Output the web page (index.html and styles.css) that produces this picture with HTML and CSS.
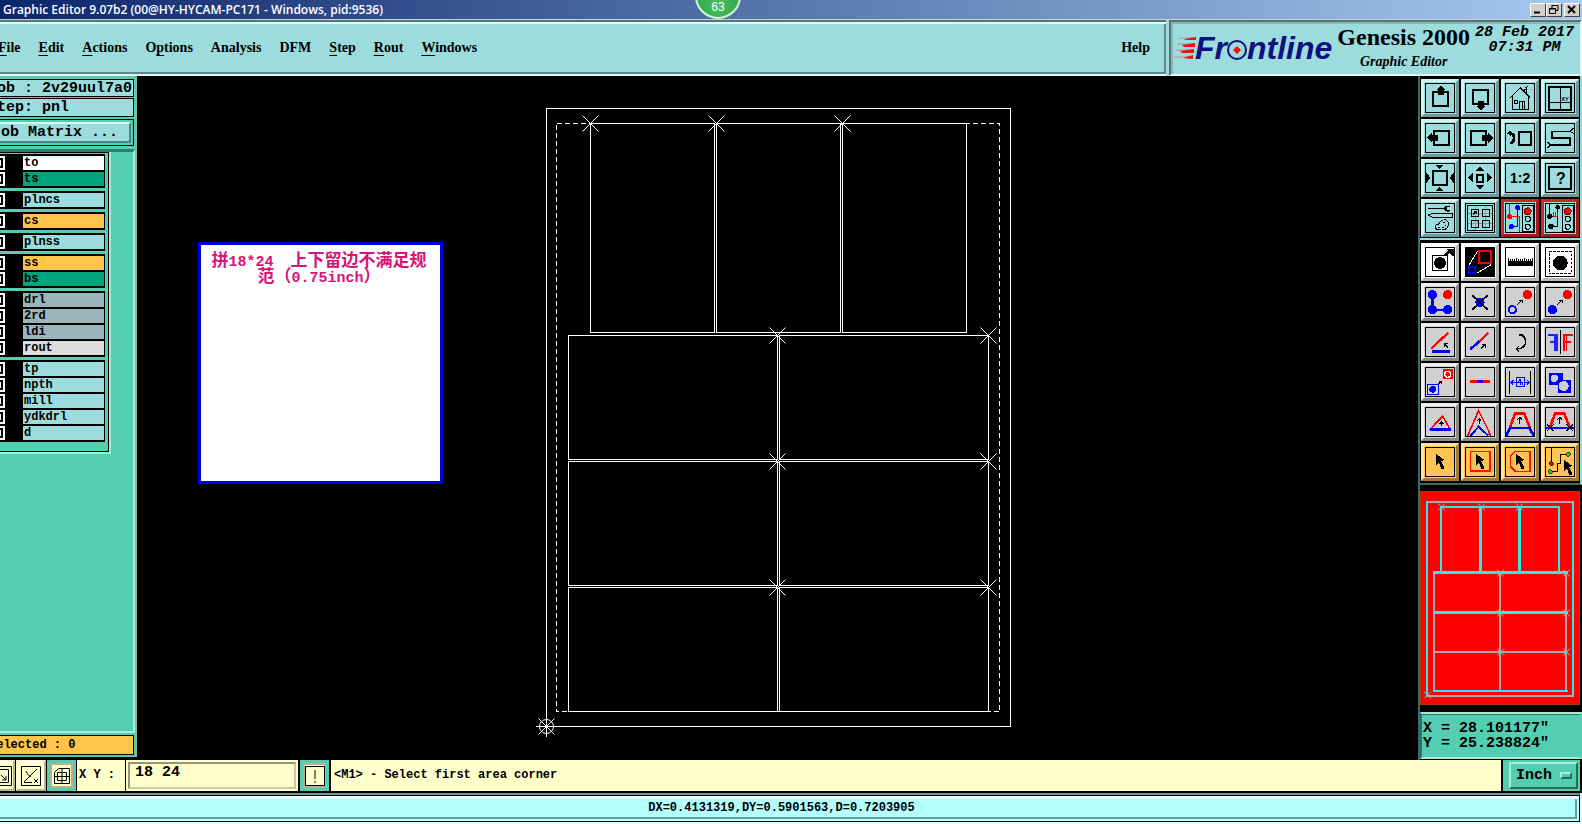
FILE: index.html
```html
<!DOCTYPE html>
<html lang="en">
<head>
<meta charset="utf-8">
<title>Graphic Editor</title>
<link rel="stylesheet" href="styles.css">
</head>
<body>
<svg class="defs" width="0" height="0" aria-hidden="true">
  <defs>
    <path id="cursor" d="M44 31L70 51L61 55L71 76L63 80L53 59L45 66Z"/>
    <path id="cross" d="M-8 -8L8 8M8 -8L-8 8"/>
    <g id="lamps"><rect x="64" y="19" width="32" height="78" fill="#9cdcdc" stroke="#000" stroke-width="3"/><circle cx="80" cy="37" r="11" fill="#f00" stroke="#000" stroke-width="2"/><circle cx="80" cy="60" r="8" fill="none" stroke="#000" stroke-width="3"/><circle cx="80" cy="83" r="8" fill="none" stroke="#000" stroke-width="3"/></g>
  </defs>
</svg>
<div class="app">
  <header class="titlebar">
    <h1>Graphic Editor 9.07b2 (00@HY-HYCAM-PC171 - Windows, pid:9536)</h1>
    <div class="winbtns">
      <button aria-label="Minimize"><svg viewBox="0 0 12 11"><path d="M2 8.5H8" stroke-width="2"/></svg></button>
      <button aria-label="Restore"><svg viewBox="0 0 12 11"><path d="M4 1.5H10V6.5H8M4 1V4M1.5 4.5H7.5V9.5H1.5ZM1 5H8"/></svg></button>
      <button class="close" aria-label="Close"><svg viewBox="0 0 12 11"><path d="M2 2L9 9M9 2L2 9" stroke-width="2"/></svg></button>
    </div>
  </header>
  <div class="badge">63</div>

  <div class="top">
    <nav class="menubar">
      <a href="#"><u>F</u>ile</a><a href="#"><u>E</u>dit</a><a href="#"><u>A</u>ctions</a><a href="#">O<u>p</u>tions</a><a href="#">Analysis</a><a href="#">DFM</a><a href="#"><u>S</u>tep</a><a href="#"><u>R</u>out</a><a href="#"><u>W</u>indows</a>
      <a href="#" class="help">Help</a>
    </nav>
    <div class="brand">
      <div class="logo">
        <svg class="speed" viewBox="0 0 22 24"><path d="M5 2H22M3 8H21M2 14H20M0 21H19" stroke="#c88" stroke-width="1"/><path d="M10 3L22 1V4H12ZM8 9L21 7V11H10ZM6 15L20 13V17H8ZM9 22L19 19V23Z" fill="#f01010"/></svg>
        <span>Fr</span><svg class="eye" viewBox="0 0 20 20"><circle cx="10" cy="10" r="9" fill="none" stroke="#101080" stroke-width="2"/><path d="M10 6L14 10L10 14L6 10Z" fill="#f01010"/></svg><span>ntline</span>
      </div>
      <div class="product"><strong>Genesis 2000</strong><em>Graphic Editor</em></div>
      <div class="clock">28 Feb 2017<br>07:31 PM</div>
    </div>
  </div>

  <main class="main">
    <aside class="left">
      <div class="field">Job : 2v29uul7a0</div>
      <div class="field">Step: pnl</div>
      <div class="matrix"><button>Job Matrix ...</button></div>
      <div class="layers-area">
        <div class="layers">
          <div class="group">
            <label class="w"><input type="checkbox"><span>to</span></label>
            <label class="g"><input type="checkbox"><span>ts</span></label>
          </div>
          <div class="group"><label><input type="checkbox"><span>plncs</span></label></div>
          <div class="group"><label class="y"><input type="checkbox"><span>cs</span></label></div>
          <div class="group"><label><input type="checkbox"><span>plnss</span></label></div>
          <div class="group">
            <label class="y"><input type="checkbox"><span>ss</span></label>
            <label class="g"><input type="checkbox"><span>bs</span></label>
          </div>
          <div class="group">
            <label class="s"><input type="checkbox"><span>drl</span></label>
            <label class="s"><input type="checkbox"><span>2rd</span></label>
            <label class="s"><input type="checkbox"><span>ldi</span></label>
            <label class="l"><input type="checkbox"><span>rout</span></label>
          </div>
          <div class="group">
            <label><input type="checkbox"><span>tp</span></label>
            <label><input type="checkbox"><span>npth</span></label>
            <label><input type="checkbox"><span>mill</span></label>
            <label><input type="checkbox"><span>ydkdrl</span></label>
            <label><input type="checkbox"><span>d</span></label>
          </div>
        </div>
      </div>
      <div class="selected">Selected : 0</div>
    </aside>

    <section class="stage">
      <svg viewBox="137 76 1281 684" fill="none" stroke="#fff" stroke-width="1">
        <g shape-rendering="crispEdges">
          <rect x="546.5" y="108.5" width="464" height="618"/>
          <rect x="556.5" y="123.5" width="443" height="588" stroke-dasharray="5 3"/>
          <rect x="590.5" y="123.5" width="124" height="209"/><rect x="716.5" y="123.5" width="124" height="209"/><rect x="842.5" y="123.5" width="124" height="209"/>
          <rect x="568.5" y="335.5" width="209" height="124"/><rect x="779.5" y="335.5" width="209" height="124"/>
          <rect x="568.5" y="461.5" width="209" height="124"/><rect x="779.5" y="461.5" width="209" height="124"/>
          <rect x="568.5" y="587.5" width="209" height="124"/><rect x="779.5" y="587.5" width="209" height="124"/>
          <path d="M536 726.5H557M546.5 716V737"/>
        </g>
        <circle cx="546.5" cy="726.5" r="7"/>
        <use href="#cross" x="590.5" y="123.5"/><use href="#cross" x="716.5" y="123.5"/><use href="#cross" x="842.5" y="123.5"/>
        <use href="#cross" x="777.5" y="335.5"/><use href="#cross" x="988.5" y="335.5"/>
        <use href="#cross" x="777.5" y="461.5"/><use href="#cross" x="988.5" y="461.5"/>
        <use href="#cross" x="777.5" y="587.5"/><use href="#cross" x="988.5" y="587.5"/>
        <use href="#cross" x="546.5" y="726.5"/>
      </svg>
      <div class="note" lang="zh-CN">拼<span>18*24</span>　上下留边不满足规范（<span>0.75inch</span>）</div>
    </section>

    <aside class="right">
      <div class="tools view">
        <button aria-label="Pan up"><svg viewBox="15 15 84 84"><rect x="36" y="39" width="45" height="42" class="k6"/><path d="M60 19L75 34H69V48H51V34H45Z"/></svg></button>
        <button aria-label="Pan down"><svg viewBox="15 15 84 84"><rect x="37" y="34" width="45" height="42" class="k6"/><path d="M59 95L74 80H68V65H50V80H44Z"/></svg></button>
        <button aria-label="Home"><svg viewBox="15 15 84 84"><path class="k3" d="M28 56L58 27L88 56M33 52V90H83V52M56 90V66H71V90M40 64H48V72H40ZM70 37V30H77V44M74 24L77 27L80 20M64 66V90"/></svg></button>
        <button aria-label="Coordinates view"><svg viewBox="15 15 84 84"><rect x="24" y="25" width="66" height="67" class="k6"/><path class="k3" d="M58 25V92M24 71H90"/><text x="61" y="67" font-size="17">XY</text></svg></button>
        <button aria-label="Pan left"><svg viewBox="15 15 84 84"><rect x="40" y="35" width="44" height="43" class="k6"/><path d="M18 57L34 41V48H51V67H34V73Z"/></svg></button>
        <button aria-label="Pan right"><svg viewBox="15 15 84 84"><rect x="31" y="35" width="44" height="43" class="k6"/><path d="M96 57L81 41V48H63V67H81V73Z"/></svg></button>
        <button aria-label="Previous view"><svg viewBox="15 15 84 84"><rect x="54" y="39" width="37" height="38" class="k6"/><path d="M18 43L31 33V53Z"/><path d="M29 43Q40 46 39 59Q38 72 26 73" fill="none" stroke="#000" stroke-width="8"/></svg></button>
        <button aria-label="Path"><svg viewBox="15 15 84 84"><path class="k5" d="M88 37H32V57H86V78H28"/><path class="k3" d="M88 37L97 27M88 37L98 44M28 78L19 69M28 78L20 87"/></svg></button>
        <button aria-label="Zoom in"><svg viewBox="15 15 84 84"><rect x="36" y="37" width="42" height="42" class="k6"/><path d="M42 17H70L56 29ZM56 85L70 97H42ZM15 40L29 57L15 73ZM99 40L85 57L99 73Z"/></svg></button>
        <button aria-label="Zoom out"><svg viewBox="15 15 84 84"><rect x="47" y="48" width="20" height="20" class="k6"/><path d="M57 24L71 37H43ZM57 92L43 79H71ZM21 57L35 43V71ZM93 57L79 43V71Z"/></svg></button>
        <button aria-label="Scale 1:2"><svg viewBox="15 15 84 84"><text x="27" y="73" font-size="42">1:2</text></svg></button>
        <button aria-label="Help"><svg viewBox="15 15 84 84"><rect x="24" y="25" width="66" height="66" class="k6"/><text x="45" y="76" font-size="48">?</text></svg></button>
        <button aria-label="Setup"><svg viewBox="15 15 84 84"><path d="M22 26H68Q72 18 82 20L88 24H78V33H89L82 38Q72 39 68 31H22Z"/><path class="k3" d="M22 48L34 44H93V54H34Z"/><path class="k3" d="M63 64Q81 59 82 74Q82 92 62 93Q43 94 43 82Q44 75 53 75Q57 66 63 64M52 84H57M63 86H68M72 79H76M66 71H71"/></svg></button>
        <button aria-label="Grid"><svg viewBox="15 15 84 84"><path d="M42 18V96M74 18V96M18 42H96M18 74H96" stroke="#9a9a9a" stroke-width="3"/><g class="k3"><rect x="19.500" y="19.500" width="75" height="75"/><rect x="31" y="30" width="21" height="23"/><rect x="63" y="30" width="22" height="23"/><rect x="31" y="63" width="21" height="22"/><rect x="63" y="63" width="22" height="22"/><path d="M36 47L46 37M38 37H46V45"/></g></svg></button>
        <button class="red" aria-label="Net compare"><svg viewBox="15 15 84 84"><path d="M26 15V53H54V99" fill="none" stroke="#f00" stroke-width="3"/><path d="M50 26V83H31" fill="none" stroke="#00c" stroke-width="3"/><circle cx="50" cy="26" r="8" fill="#00f"/><circle cx="31" cy="83" r="8" fill="#00f"/><circle cx="26" cy="53" r="8" fill="#f00"/><use href="#lamps"/></svg></button>
        <button class="red" aria-label="Net check"><svg viewBox="15 15 84 84"><path class="k3" d="M26 15V52H38M50 25V82H30"/><path d="M36 52H50M38 38V52M44 38V52M50 38V52" stroke="#f00" stroke-width="3"/><circle cx="50" cy="25" r="7"/><circle cx="26" cy="52" r="8"/><circle cx="30" cy="82" r="8"/><use href="#lamps"/></svg></button>
      </div>
      <div class="tools edit">
        <button class="wh" aria-label="Add feature"><svg viewBox="15 15 84 84"><rect class="k3" x="35" y="36" width="45" height="46"/><circle cx="57" cy="60" r="18"/><path d="M72 37L85 25" stroke="#000" stroke-width="9"/><path d="M77 18H98V38H92Z"/></svg></button>
        <button class="wh" aria-label="Move and resize"><svg viewBox="15 15 84 84"><rect x="15" y="15" width="84" height="84"/><rect x="54" y="25" width="36" height="35" fill="none" stroke="#f00" stroke-width="6"/><rect x="24" y="73" width="19" height="18" fill="none" stroke="#00f" stroke-width="6"/><path d="M24 66L50 24M47 91L90 65" stroke="#fff" stroke-width="3"/></svg></button>
        <button class="wh" aria-label="Measure"><svg viewBox="15 15 84 84"><rect x="21" y="54" width="75" height="15"/><path d="M22.500 45V60M28.500 48V60M34.500 48V60M40.500 48V60M46.500 45V60M52.500 48V60M58.500 48V60M64.500 48V60M70.500 45V60M76.500 48V60M82.500 48V60M88.500 48V60M94.500 45V60" stroke="#000" stroke-width="3"/></svg></button>
        <button class="wh" aria-label="Select feature"><svg viewBox="15 15 84 84"><rect class="k3" x="24" y="26" width="66" height="66" stroke-dasharray="8 4"/><circle cx="58" cy="60" r="22"/></svg></button>
        <button aria-label="Connect nodes"><svg viewBox="15 15 84 84"><path d="M34 35V80H80" fill="none" stroke="#00f" stroke-width="7"/><g fill="#00f"><circle cx="34" cy="35" r="14"/><circle cx="34" cy="80" r="14"/><circle cx="80" cy="80" r="14"/></g><circle cx="80" cy="35" r="14" fill="#f00"/></svg></button>
        <button aria-label="Delete"><svg viewBox="15 15 84 84"><circle cx="57" cy="58" r="14" fill="#00f"/><path class="k5" d="M34 37L80 80M80 37L34 80"/></svg></button>
        <button aria-label="Copy point"><svg viewBox="15 15 84 84"><circle cx="34" cy="80" r="11" fill="none" stroke="#00f" stroke-width="6"/><circle cx="79" cy="35" r="14" fill="#f00"/><path class="k3" d="M47 67L64 51M54 51H65V61"/></svg></button>
        <button aria-label="Move point"><svg viewBox="15 15 84 84"><circle cx="34" cy="80" r="14" fill="#00f"/><circle cx="79" cy="35" r="14" fill="#f00"/><path class="k3" d="M47 67L64 51M54 51H65V61"/></svg></button>
        <button aria-label="Change angle"><svg viewBox="15 15 84 84"><path d="M30 77L82 29" stroke="#f00" stroke-width="7"/><path d="M33 85H88" stroke="#00f" stroke-width="8"/><path class="k3" d="M82 74L71 63M70 72V62H80"/></svg></button>
        <button aria-label="Extend line"><svg viewBox="15 15 84 84"><path d="M28 79L56 54" stroke="#00f" stroke-width="8"/><path d="M54 56L82 29" stroke="#f00" stroke-width="7"/><path class="k3" d="M60 77L72 65M63 64H73V74"/></svg></button>
        <button aria-label="Rotate"><svg viewBox="15 15 84 84"><path class="k5" d="M55 35H62Q74 44 74 56Q74 70 60 76L48 77"/><path class="k3" d="M55 68L46 77L55 86"/></svg></button>
        <button aria-label="Mirror"><svg viewBox="15 15 84 84"><path d="M22 35H49V84M26 57H48M41 40V84" fill="none" stroke="#22f" stroke-width="6"/><path d="M95 35H68V84M90 57H69M76 40V84" fill="none" stroke="#f00" stroke-width="5"/><path class="k3" d="M58.500 20V92"/></svg></button>
        <button aria-label="Replace shape"><svg viewBox="15 15 84 84"><rect x="65" y="19" width="31" height="30" fill="#f00"/><circle cx="80" cy="34" r="9" fill="none" stroke="#fff" stroke-width="4"/><rect x="20" y="64" width="31" height="31" fill="none" stroke="#00f" stroke-width="3"/><circle cx="35" cy="79" r="10" fill="#00f"/><path class="k3" d="M53 63L61 55M54 54H62V62"/></svg></button>
        <button aria-label="Break line"><svg viewBox="15 15 84 84"><path d="M26 55H87" stroke="#f00" stroke-width="8"/><path d="M49 55H66" stroke="#00f" stroke-width="7"/></svg></button>
        <button aria-label="Spacing"><svg viewBox="15 15 84 84"><path class="k3" d="M26 24V92M89 24V92"/><path d="M45.500 44H69V71H45.500ZM30 58H45M69 58H85M37 51L30 58L37 65M78 51L85 58L78 65M57 48V66M57 50L51 58H63V66" fill="none" stroke="#00f" stroke-width="3"/></svg></button>
        <button aria-label="Merge shapes"><svg viewBox="15 15 84 84"><path d="M25 30H65V50H91V90H51V67H25Z" fill="#00f"/><circle cx="40" cy="46" r="11" fill="#d0d0d0"/><circle cx="68" cy="69" r="15" fill="#d0d0d0"/></svg></button>
        <button aria-label="Triangle edit"><svg viewBox="15 15 84 84"><path d="M26 80L65 40L88 80" fill="none" stroke="#f00" stroke-width="5"/><path d="M27 79H89" stroke="#00f" stroke-width="8"/><path class="k3" d="M62 70V57M56 63L62 57L68 63"/></svg></button>
        <button aria-label="Stretch corner"><svg viewBox="15 15 84 84"><path d="M20 98L53 23L90 98" fill="none" stroke="#f00" stroke-width="5"/><path d="M28 98L53 71L82 98" fill="none" stroke="#00f" stroke-width="6"/><path class="k3" d="M55 64V47M49 53L55 47L61 53"/></svg></button>
        <button aria-label="Stretch edge"><svg viewBox="15 15 84 84"><path d="M27 73L42 32H70L86 73" fill="none" stroke="#f00" stroke-width="8"/><path d="M15 98L27 75H86L98 98" fill="none" stroke="#00f" stroke-width="8"/><path class="k3" d="M56 62V43M49 50L56 43L63 50"/></svg></button>
        <button aria-label="Trim edge"><svg viewBox="15 15 84 84"><path d="M27 73L42 32H70L86 73" fill="none" stroke="#f00" stroke-width="8"/><path d="M15 75H99" stroke="#00f" stroke-width="8"/><path class="k3" d="M56 62V43M49 50L56 43L63 50M18 64L38 84M38 64L18 84M76 64L96 84M96 64L76 84"/></svg></button>
        <button class="or" aria-label="Select single"><svg viewBox="15 15 84 84"><use href="#cursor"/></svg></button>
        <button class="or" aria-label="Select in frame"><svg viewBox="15 15 84 84"><rect x="28" y="25" width="59" height="60" fill="none" stroke="#f10" stroke-width="5"/><use href="#cursor"/></svg></button>
        <button class="or" aria-label="Select in polygon"><svg viewBox="15 15 84 84"><path d="M43 25H87V85H43L28 70V40Z" fill="none" stroke="#f10" stroke-width="5"/><use href="#cursor"/></svg></button>
        <button class="or" aria-label="Select net"><svg viewBox="15 15 84 84"><path class="k3" d="M31 15V58M28 86H49V60H58V34H82"/><g stroke="#000" stroke-width="2"><circle cx="31" cy="62" r="6" fill="#c10"/><circle cx="82" cy="34" r="6" fill="#0d3"/><circle cx="28" cy="86" r="6" fill="#0d3"/></g><use href="#cursor" x="24" y="18"/></svg></button>
      </div>
      <div class="mapbox">
        <svg viewBox="1420 492 160 213" fill="none" stroke-width="2">
          <g shape-rendering="crispEdges">
            <rect x="1427" y="502" width="146" height="194" stroke="#30e8e8"/>
            <path d="M1428 502H1573M1428 696H1573" stroke="#b0a8a8"/>
            <path d="M1434 573V691M1500 573V691M1566 573V691M1434 652H1566" stroke="#b0a8a8"/>
            <path d="M1441 572V507H1559V572M1433 691H1568" stroke="#30e8e8"/>
            <path d="M1480.500 507V572M1519.500 507V572M1433 572.500H1568M1434 612.500H1568" stroke="#30e8e8" stroke-width="3"/>
          </g>
          <path d="M1438 504l7 7m0-7l-7 7M1478 504l7 7m0-7l-7 7M1516 504l7 7m0-7l-7 7M1497 570l7 7m0-7l-7 7M1563 570l7 7m0-7l-7 7M1497 610l7 7m0-7l-7 7M1563 610l7 7m0-7l-7 7M1497 649l7 7m0-7l-7 7M1563 649l7 7m0-7l-7 7M1424 692l7 7m0-7l-7 7" stroke="#60d8d8" stroke-width="1"/>
        </svg>
      </div>
      <div class="coords">X = 28.101177"<br>Y = 25.238824"</div>
    </aside>
  </main>

  <div class="command">
    <button class="cbtn" aria-label="Snap corner"><svg viewBox="0 0 20 20"><path d="M.5 .5H19.500V19.500H.5ZM3.500 3.500H16.500V16.500H3.500ZM9 9L14 14M14 10V14H10"/></svg></button>
    <button class="cbtn" aria-label="Angle"><svg viewBox="0 0 20 20"><path d="M.5 .5H19.500V19.500H.5ZM3 16.500H11M3 16L16 3M5 5Q6 9 10 11M13 13L17 17M17 13L13 17"/></svg></button>
    <button class="cbtn on" aria-label="Grid snap"><svg viewBox="0 0 20 20"><path d="M6.500 2.500H17.500V17.500H2.500V6.500ZM5.500 6.500H14.500V14.500H5.500ZM10 2V18M2 10.500H18"/></svg></button>
    <label class="xy" for="xy">X Y :</label>
    <div class="entry"><input id="xy" type="text" value="18 24"></div>
    <button class="cbtn on" aria-label="Alert"><svg viewBox="0 0 20 20"><path d="M.5 .5H19.500V19.500H.5ZM10 4V13M10 15V17"/></svg></button>
    <p class="message">&lt;M1&gt; - Select first area corner</p>
    <div class="unit"><button>Inch<i></i></button></div>
  </div>
  <footer class="status"><div>DX=0.4131319,DY=0.5901563,D=0.7203905</div></footer>
</div>
</body>
</html>
```

FILE: styles.css
```css
* { box-sizing: border-box; }
body { margin: 0; background: #e4ffff; overflow: hidden; color: #000; }
button { font: inherit; color: inherit; padding: 0; margin: 0; border-radius: 0; }
svg { display: block; }
.defs { position: absolute; }

/* The window hangs slightly past the left edge of the screen. */
.app { display: flex; flex-direction: column; height: 100vh; margin-left: -12px; position: relative; }

.titlebar { flex: none; display: flex; justify-content: space-between; align-items: center; height: 20px; padding: 0 2px 0 15px; background: linear-gradient(90deg, #0a246a, #a6caf0); border-bottom: 1px solid #d4d0c8; }
.titlebar h1 { margin: 0; font: 600 12px/18px "Open Sans", sans-serif; color: #fff; white-space: nowrap; }
.winbtns { display: flex; }
.winbtns button { width: 16px; height: 14px; background: #d4d0c8; border: 1px solid; border-color: #fff #404040 #404040 #fff; }
.winbtns .close { margin-left: 2px; }
.winbtns svg { width: 12px; height: 11px; fill: none; stroke: #000; stroke-width: 1; margin: auto; }
.badge { position: absolute; left: 707px; top: -27px; width: 46px; height: 46px; border-radius: 50%; border: 2px solid #d8f4d8; background: radial-gradient(circle at 50% 70%, #48c060, #229a40); color: #fff; font: 12px/14px "Liberation Sans", sans-serif; text-align: center; padding-top: 25px; }

.top { flex: none; display: flex; height: 56px; background: #9cdcdc; }
.menubar { flex: 1; display: flex; align-items: center; gap: 18px; padding: 0 36px 0 10px; border-top: 2px solid #507878; border-bottom: 2px solid #e0f8f8; box-shadow: inset 0 2px #e0f8f8, inset -2px -2px #608888; margin-right: 3px; }
.menubar a { font: bold 14px/20px "Liberation Serif", serif; color: #000; text-decoration: none; }
.menubar u { text-underline-offset: 3px; }
.menubar .help { margin-left: auto; margin-right: -20px; }
.brand { flex: none; display: flex; gap: 5px; width: 413px; padding: 2px 4px 0 3px; border-left: 2px solid #507878; border-top: 2px solid #507878; border-bottom: 2px solid #e0f8f8; border-right: 2px solid #e0f8f8; box-shadow: inset 2px 2px #86b8b8; }
.logo { display: flex; align-items: center; height: 48px; color: #101080; font: italic bold 32px/48px "Liberation Sans", sans-serif; }
.speed { width: 22px; height: 24px; margin-right: -1px; }
.eye { width: 20px; height: 20px; margin-top: 4px; }
.product { display: flex; flex-direction: column; align-items: center; white-space: nowrap; }
.product strong { font: bold 24px/26px "Liberation Serif", serif; }
.product em { font: italic bold 14px/24px "Liberation Serif", serif; }
.clock { font: italic bold 15px/15px "Liberation Mono", monospace; text-align: center; white-space: nowrap; padding-top: 1px; }

.main { flex: 1; min-height: 0; display: flex; background: #000; }

.left { flex: none; width: 149px; margin-bottom: 3px; display: flex; flex-direction: column; background: #54ceb0; border-right: 2px solid #78bca8; padding-top: 3px; font: bold 15px/17px "Liberation Mono", monospace; }
.field { height: 18px; margin-right: 1px; background: #9cdcdc; border: 1px solid #000; border-left: 0; white-space: pre; }
.field + .field { height: 19px; margin-top: 1px; }
.matrix { margin: 2px 1px 3px 0; border: 1px solid #000; border-left: 0; padding: 2px; }
.matrix button { width: 100%; height: 21px; background: #9cdcdc; border: 2px solid; border-color: #d8f8f4 #508484 #508484 #9cdcdc; text-align: left; line-height: 16px; display: block; }
.layers-area { flex: 1; border-top: 3px solid #307868; border-right: 2px solid #a8ecd8; border-bottom: 2px solid #a8ecd8; }
.layers { width: 123px; height: 302px; border-right: 2px solid #a8ecd8; border-bottom: 2px solid #a8ecd8; box-shadow: inset -1px -1px #000, inset 0 1px #000; padding: 2px 4px 0 0; display: flex; flex-direction: column; gap: 3px; }
.group { background: #000; padding: 2px 1px 2px 0; display: flex; flex-direction: column; gap: 2px; }
.group label { display: flex; height: 14px; font-size: 12px; line-height: 14px; }
.group input { appearance: none; margin: 0 18px 0 3px; width: 14px; height: 14px; border: 2px solid #fff; outline: 2px solid #000; outline-offset: -4px; background: #fff; }
.group span { flex: 1; background: #9cdcdc; padding-left: 1px; }
.group .w span { background: #fff; }
.group .g span { background: #00a47c; }
.group .y span { background: #ffc44c; }
.group .s span { background: #9cb4bc; }
.group .l span { background: #dcdcdc; }
.selected { height: 20px; margin: 2px 1px 2px 0; border: 1px solid #000; background: #ffc44c; font-size: 12px; line-height: 18px; }

.stage { flex: 1; position: relative; background: #000; overflow: hidden; }
.stage > svg { width: 100%; height: 100%; }
.note { position: absolute; left: 61px; top: 166px; width: 245px; height: 242px; border: 3px solid #0000dc; background: #fff; color: #d81474; padding: 6px 12px 6px 9px; font: bold 17px/16px "Noto Sans CJK SC", sans-serif; text-align: center; }
.note span { font: bold 15px/1px "Liberation Mono", monospace; }

.right { flex: none; width: 164px; border-left: 2px solid #386c64; display: flex; flex-direction: column; background: #000; }
.tools { display: grid; grid-template-columns: repeat(4, 38px); gap: 2px; padding: 3px 2px 1px 1px; background: #000; border-right: 2px solid #9cdcdc; --face: #9cdcdc; --hi: #d4f4f4; --lo: #6c9c9c; }
.edit { border-top: 2px solid #9cdcdc; border-bottom: 2px solid #386c64; --face: #d0d0d0; --hi: #f0f0f0; --lo: #888; padding-bottom: 2px; }
.tools .wh { --face: #fff; --hi: #fff; --lo: #b8b8b8; }
.tools .or { --face: #ffc454; --hi: #ffe4a8; --lo: #a47c30; }
.tools .red { --hi: #d02828; --lo: #a01818; }
.tools button { height: 38px; background: var(--face); border: 3px solid; border-color: var(--hi) var(--lo) var(--lo) var(--hi); padding: 1px; }
.tools svg { width: 30px; height: 30px; border: 1px solid #000; shape-rendering: crispEdges; }
.tools text { font-family: "Liberation Sans", sans-serif; font-weight: bold; }
.k3, .k5, .k6 { fill: none; stroke: #000; stroke-width: 3; }
.k5 { stroke-width: 5; }
.k6 { stroke-width: 6; }
.mapbox { flex: 1; background: #000; padding: 6px 2px 7px 0; min-height: 0; }
.mapbox svg { width: 100%; height: 100%; background: #f00; outline: 1px solid #b03c00; outline-offset: -1px; }
.coords { height: 47px; margin-bottom: 1px; border: 2px solid; border-color: #a8ecd8 #54ceb0 #a8ecd8 #386c64; background: #54ceb0; box-shadow: inset 0 1px #386c64; padding: 7px 1px; font: bold 15px/15px "Liberation Mono", monospace; white-space: nowrap; }

.command { flex: none; display: flex; height: 31px; background: #000; font: bold 12px/31px "Liberation Mono", monospace; }
.command > * { background: #ffffcc; }
.cbtn { flex: none; width: 27px; border: 2px solid; border-color: #fff8e0 #b8b490 #b8b490 #fff8e0; margin-right: 1px; }
.cbtn + .cbtn { width: 30px; }
.cbtn svg { width: 20px; height: 20px; margin: auto; fill: none; stroke: #000; stroke-width: 1; }
.command .on { width: 29px; border: 3px solid #54ceb0; box-shadow: inset 0 0 0 2px #b8b090; }
.xy { width: 48px; padding-left: 2px; margin-right: 1px; white-space: pre; }
.entry { width: 172px; padding: 2px; margin-right: 2px; }
.entry input { display: block; width: 100%; height: 27px; border: 2px solid; border-color: #98947c #ccc8a0 #ccc8a0 #98947c; background: #ffffcc; border-radius: 0; padding: 0 0 6px 5px; font: bold 15px/17px "Liberation Mono", monospace; color: #000; }
.message { flex: 1; margin: 0 2px 0 1px; padding-left: 3px; }
.command .unit { width: 77px; margin-right: 2px; padding: 2px 2px 2px 6px; background: #54ceb0; }
.unit button { width: 100%; height: 27px; display: flex; align-items: center; justify-content: space-between; padding: 0 4px 0 5px; background: #54ceb0; border: 2px solid; border-color: #a8ecd8 #286858 #286858 #a8ecd8; font: bold 15px/20px "Liberation Mono", monospace; }
.unit i { width: 12px; height: 7px; border: 2px solid; border-color: #a8ecd8 #286858 #286858 #a8ecd8; }

.status { flex: none; background: #e4ffff; border-top: 2px solid #000; padding-bottom: 2px; height: 33px; }
.status div { height: 29px; margin-right: 2px; background: #b4ffff; border-top: 2px solid #789090; border-bottom: 1px solid #000; border-right: 1px solid #000; box-shadow: inset 0 1px #000, inset 0 4px #e4ffff, inset -2px -2px #c4ffff, inset -4px -4px #60a0a0; text-align: center; padding-right: 4px; font: bold 12px/26px "Liberation Mono", monospace; }
```
